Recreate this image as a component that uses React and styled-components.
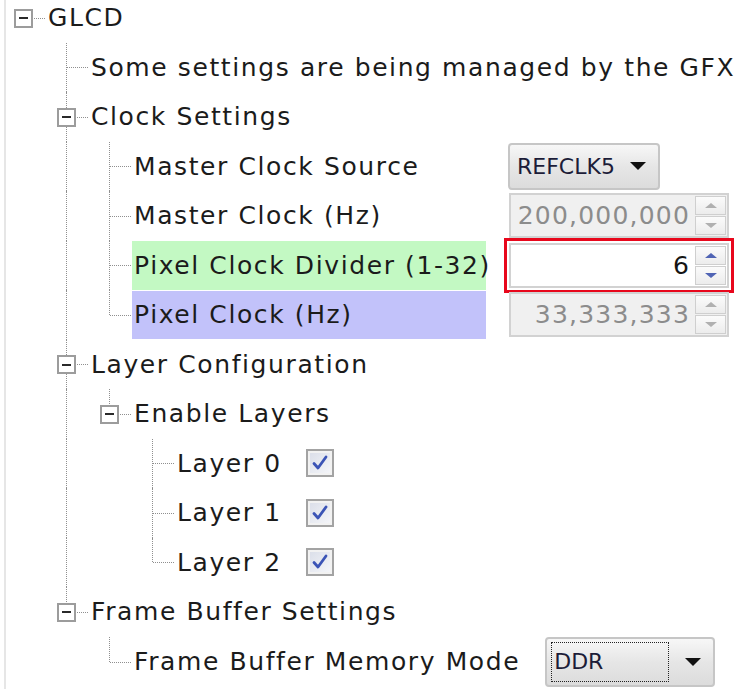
import React from 'react';
import styled, { createGlobalStyle, css } from 'styled-components';

const Global = createGlobalStyle`
  html, body { margin: 0; padding: 0; background: #fff; }
  body { font-family: "DejaVu Sans", "Noto Sans", sans-serif; }
`;

const Panel = styled.div`
  width: 745px;
  height: 689px;
  overflow: hidden;
  background: linear-gradient(to right, #fff 4px, #e6e6e6 4px, #e6e6e6 6px, #fff 6px);
  font-size: 25px;
  letter-spacing: 1.6px;
  color: #1b1b1b;
`;

const Tree = styled.div`
  margin-top: -7px;
  padding-left: 2px;
  display: flex;
  flex-direction: column;
`;

const Row = styled.div`
  height: 49.5px;
  display: grid;
  grid-template-columns: minmax(484px, max-content) auto;
  column-gap: 19px;
  align-items: center;
`;

const Node = styled.div`
  display: flex;
  align-items: center;
  align-self: stretch;
  white-space: nowrap;
`;

const Cell = styled.div`
  position: relative;
  width: 43px;
  flex: none;
  align-self: stretch;
  &::before {
    content: '';
    position: absolute;
    left: 21px;
    top: 0;
    display: ${p => (p.$v === 'none' ? 'none' : 'block')};
    height: ${p => (p.$v === 'full' ? '100%' : '50%')};
    border-left: 1px dotted #8f8f8f;
  }
  &::after {
    content: '';
    position: absolute;
    left: 22px;
    right: 0;
    top: 50%;
    display: ${p => (p.$h ? 'block' : 'none')};
    border-top: 1px dotted #8f8f8f;
  }
`;

const Expander = styled.span`
  position: absolute;
  z-index: 1;
  left: 12px;
  top: calc(50% - 9px);
  width: 19px;
  height: 19px;
  box-sizing: border-box;
  border: 2px solid #9c9c9c;
  background: #fff;
  &::after {
    content: '';
    position: absolute;
    left: 3px;
    right: 3px;
    top: 6.5px;
    height: 2px;
    background: #2a2a2a;
  }
`;

const Label = styled.div`
  margin-left: 1px;
  padding: 0 2px;
  display: flex;
  align-items: center;
  align-self: stretch;
  margin-block: 0.5px;
  background: ${p => p.$bg || 'transparent'};
  ${p => p.$bg && css`width: 354px; box-sizing: border-box;`}
`;

const CheckBox = styled.span`
  margin-left: 22px;
  width: 28px;
  height: 28px;
  box-sizing: border-box;
  border: 2px solid #a3a3a3;
  background: linear-gradient(135deg, #d9dde8, #f6f7fa);
  box-shadow: inset 0 0 0 2px #f2f2f2;
  display: flex;
  align-items: center;
  justify-content: center;
`;

const Combo = styled.div`
  width: ${p => p.$w}px;
  height: ${p => p.$h}px;
  margin-left: ${p => p.$ml}px;
  box-sizing: border-box;
  border: 2px solid #c6c6c6;
  border-radius: 4px;
  background: linear-gradient(#f7f7f7, #e6e6e6 50%, #dcdcdc);
  display: flex;
  align-items: center;
  padding: 0 12px 0 ${p => p.$pl}px;
  color: #1c1c38;
  font-size: 22px;
  letter-spacing: 0;
`;

const ComboText = styled.span`
  flex: 1;
  ${p => p.$focus && css`
    align-self: stretch;
    display: flex;
    align-items: center;
    margin: 3px 16px 3px 0;
    padding-left: 2px;
    border: 1px dotted #222;
  `}
`;

const Arrow = styled.span`
  width: 0;
  height: 0;
  border-left: 8px solid transparent;
  border-right: 8px solid transparent;
  border-top: 8px solid #111;
`;

const Spin = styled.div`
  width: 220px;
  height: 45px;
  margin-left: 4px;
  box-sizing: border-box;
  display: flex;
  border: 2px solid #d2d2d2;
  background: ${p => (p.$disabled ? '#f0f0f0' : '#fff')};
  color: ${p => (p.$disabled ? '#8c8c8c' : '#151515')};
  letter-spacing: 1.2px;
  ${p => p.$highlight && css`
    outline: 3px solid #e8071c;
    outline-offset: 2px;
  `}
`;

const SpinValue = styled.span`
  flex: 1;
  display: flex;
  align-items: center;
  justify-content: flex-end;
  padding-right: 5px;
`;

const SpinButtons = styled.div`
  width: 31px;
  margin: 1px 1px 1px 0;
  display: flex;
  flex-direction: column;
  gap: 1px;
`;

const SpinBtn = styled.span`
  flex: 1;
  border: 1px solid #cfcfcf;
  background: linear-gradient(#fbfbfb, #ececec);
  display: flex;
  align-items: center;
  justify-content: center;
  &::after {
    content: '';
    width: 0;
    height: 0;
    border-left: 6px solid transparent;
    border-right: 6px solid transparent;
    ${p => (p.$dir === 'up'
      ? css`border-bottom: 5px solid ${p.$active ? '#5064b4' : '#b0b0b0'};`
      : css`border-top: 5px solid ${p.$active ? '#5064b4' : '#b0b0b0'};`)}
  }
`;

const tree = {
  label: 'GLCD',
  children: [
    { label: 'Some settings are being managed by the GFX' },
    {
      label: 'Clock Settings',
      children: [
        { label: 'Master Clock Source', control: { type: 'combo', value: 'REFCLK5' } },
        { label: 'Master Clock (Hz)', control: { type: 'spin', value: '200,000,000', disabled: true } },
        { label: 'Pixel Clock Divider (1-32)', bg: '#c3f9c3', control: { type: 'spin', value: '6', highlight: true } },
        { label: 'Pixel Clock (Hz)', bg: '#c2c2fa', control: { type: 'spin', value: '33,333,333', disabled: true } },
      ],
    },
    {
      label: 'Layer Configuration',
      children: [
        {
          label: 'Enable Layers',
          children: [
            { label: 'Layer 0', check: true },
            { label: 'Layer 1', check: true },
            { label: 'Layer 2', check: true },
          ],
        },
      ],
    },
    {
      label: 'Frame Buffer Settings',
      children: [
        { label: 'Frame Buffer Memory Mode', control: { type: 'ddr', value: 'DDR' } },
      ],
    },
  ],
};

function flatten(node, level, trail, hasNext, out) {
  out.push({ node, level, trail, hasNext });
  (node.children || []).forEach((c, i, arr) =>
    flatten(c, level + 1, [...trail, hasNext], i < arr.length - 1, out)
  );
  return out;
}

const Check = () => (
  <svg width="18" height="18" viewBox="0 0 18 18">
    <path d="M3 9.5 L7 14 L15 3" fill="none" stroke="#3b54b6" strokeWidth="2.8" strokeLinecap="round" strokeLinejoin="round" />
  </svg>
);

function Control({ c }) {
  if (c.type === 'combo') {
    return (
      <Combo $w={152} $h={47} $ml={3} $pl={7}>
        <ComboText>{c.value}</ComboText>
        <Arrow />
      </Combo>
    );
  }
  if (c.type === 'ddr') {
    return (
      <Combo $w={170} $h={50} $ml={4} $pl={4}>
        <ComboText $focus>{c.value}</ComboText>
        <Arrow />
      </Combo>
    );
  }
  return (
    <Spin $disabled={c.disabled} $highlight={c.highlight}>
      <SpinValue>{c.value}</SpinValue>
      <SpinButtons>
        <SpinBtn $dir="up" $active={!c.disabled} />
        <SpinBtn $dir="down" $active={!c.disabled} />
      </SpinButtons>
    </Spin>
  );
}

export default function App() {
  const rows = flatten(tree, 0, [], false, []);
  return (
    <Panel>
      <Global />
      <Tree>
        {rows.map(({ node, level, trail, hasNext }, idx) => (
          <Row key={idx}>
            <Node>
              {trail.map((anc, i) => (
                <Cell key={i} $v={i > 0 && anc ? 'full' : 'none'} />
              ))}
              <Cell $v={level === 0 ? 'none' : hasNext ? 'full' : 'top'} $h>
                {node.children && <Expander />}
              </Cell>
              <Label $bg={node.bg}>{node.label}</Label>
              {node.check && (
                <CheckBox>
                  <Check />
                </CheckBox>
              )}
            </Node>
            {node.control && <Control c={node.control} />}
          </Row>
        ))}
      </Tree>
    </Panel>
  );
}
